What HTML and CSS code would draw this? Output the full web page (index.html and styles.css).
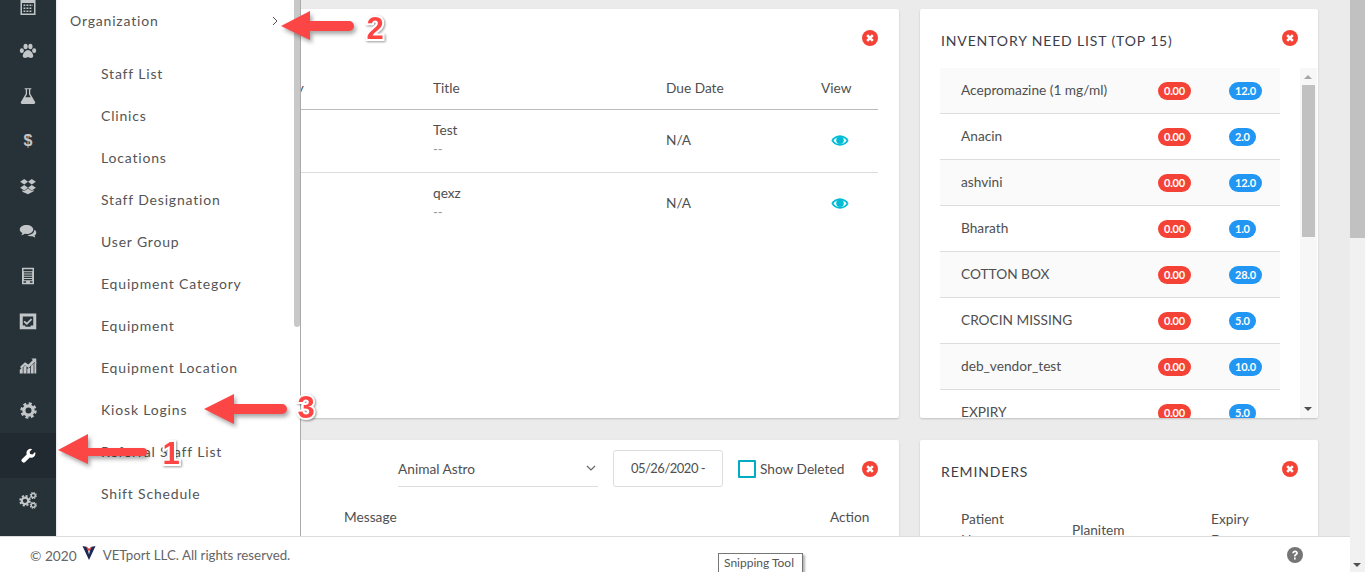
FILE: index.html
```html
<!DOCTYPE html>
<html lang="en">
<head>
<meta charset="utf-8">
<title>VETport Dashboard</title>
<link rel="stylesheet" href="styles.css">
</head>
<body>
<svg class="defs" width="0" height="0" aria-hidden="true">
  <symbol id="i-close" viewBox="0 0 16 16">
    <circle cx="8" cy="8" r="8" fill="#f44336"/>
    <path d="M5.200 5.200l5.600 5.600M10.800 5.200l-5.600 5.600" stroke="#fff" stroke-width="2.600" fill="none"/>
  </symbol>
  <symbol id="i-eye" viewBox="0 0 24 16">
    <path d="M12 1C7 1 2.800 3.800 .5 8c2.300 4.200 6.500 7 11.500 7s9.200-2.800 11.500-7C21.200 3.800 17 1 12 1z" fill="#00bcd4"/>
    <path d="M12 3.200C8.600 3.200 5.300 5 3.300 8c2 3 5.300 4.800 8.700 4.800S18.700 11 20.700 8C18.700 5 15.400 3.200 12 3.200z" fill="#fff"/>
    <circle cx="12" cy="7.600" r="5" fill="#00bcd4"/>
  </symbol>
  <symbol id="i-gear" viewBox="0 0 24 24">
    <circle cx="12" cy="12" r="6.500" fill="none" stroke="currentColor" stroke-width="4.500"/>
    <circle cx="12" cy="12" r="9.800" fill="none" stroke="currentColor" stroke-width="3.600" stroke-dasharray="4.200 3.500"/>
  </symbol>
</svg>

<div class="app">
  <div class="page">
    <div class="workspace">
      <nav class="rail">
        <a class="rail-item"><svg class="ic" viewBox="0 0 24 24"><path fill-rule="evenodd" d="M2 3h4V1h3v2h6V1h3v2h4v21H2zM4 8v14h16V8zM6 10h2.500v2H6zm4 0h2.500v2H10zm4 0h2.500v2H14zm3.500 0H18v2h-.5zM6 14h2.500v2H6zm4 0h2.500v2H10zm4 0h2.500v2H14zM6 18h2.500v2H6zm4 0h2.500v2H10zm4 0h2.500v2H14z"/></svg></a>
        <a class="rail-item"><svg class="ic" viewBox="0 0 24 24"><ellipse cx="3.800" cy="11.500" rx="2.700" ry="3.300"/><ellipse cx="8.800" cy="6" rx="2.800" ry="3.700"/><ellipse cx="15.200" cy="6" rx="2.800" ry="3.700"/><ellipse cx="20.200" cy="11.500" rx="2.700" ry="3.300"/><path d="M12 10.500c-3.200 0-7 4.500-7 7.800 0 2.200 1.600 2.900 3.200 2.900 1.500 0 2.500-.8 3.800-.8s2.300.8 3.800.8c1.600 0 3.200-.7 3.200-2.900 0-3.300-3.800-7.800-7-7.800z"/></svg></a>
        <a class="rail-item"><svg class="ic" viewBox="0 0 24 24"><path fill-rule="evenodd" d="M7.500 1.500h9V3H15v6l6.300 10.500c.9 1.500 0 3-1.600 3H4.300c-1.600 0-2.500-1.500-1.600-3L9 9V3H7.500zM10.700 3v6.500L8.400 13.500h7.200l-2.300-4V3z"/></svg></a>
        <a class="rail-item"><span class="dollar">$</span></a>
        <a class="rail-item"><svg class="ic" viewBox="0 0 24 24"><path d="M7 2.500l5 3.700-5 3.700-5.500-3.700zM17 2.500l5.500 3.700-5.500 3.700-5-3.700zM7 10.500l5 3.700-5 3.700-5.500-3.700zM17 10.500l5.500 3.700-5.500 3.700-5-3.700zM12 15.300l5 3.500 2.500-1.500v1.700L12 23l-7.500-3.500v-1.700L7 18.800z"/></svg></a>
        <a class="rail-item"><svg class="ic" viewBox="0 0 24 24"><path d="M10 4c5 0 9 2.600 9 6s-4 6-9 6c-.8 0-1.600-.1-2.300-.2C6.300 17 4.500 17.500 2.800 17.700c.8-.9 1.500-2 1.700-3.100C2.300 13.500 1 11.800 1 10c0-3.400 4-6 9-6z"/><path d="M20.600 10.300c1.500 1 2.400 2.400 2.400 3.900 0 1.500-.9 2.800-2.300 3.800.2 1 .7 1.900 1.300 2.600-1.400-.2-2.900-.6-4.100-1.600-2.600.3-5.200-.3-6.900-1.700 4.900 0 9.400-2.400 9.600-7z"/></svg></a>
        <a class="rail-item"><svg class="ic" viewBox="0 0 24 24"><path fill-rule="evenodd" d="M4 1h16v22H4zM6 3v2.500h12V3zM6.500 7v1.500h11V7zm0 3v1.500h11V10zm0 3v1.500h11V13zm0 3v1.500h11V16zM6 19v2h3.500v-2zm8.500 0v2H18v-2z"/></svg></a>
        <a class="rail-item"><svg class="ic" viewBox="0 0 24 24"><path fill-rule="evenodd" d="M1 2h22v21H1zM5 6v12h3.500v1.500h7V18H19V6zM7.500 11.500l3 2.500 5.500-5.500 1.500 1.700-7 7-4.500-4z"/></svg></a>
        <a class="rail-item"><svg class="ic" viewBox="0 0 24 24"><path d="M1.500 13l6.500-6 4.500 3L18.500 4 16.500 2h6.500v6.500l-2-2-8.200 8L8 11l-5 4.500z"/><path d="M1 17l4-3.500V22H1zM6 13l4-2v11H6zM11 15.500l4-1.500v8h-4zM16 12l3.500-3.500V22H16zM20.500 8l2.500-2v16h-2.500z"/></svg></a>
        <a class="rail-item"><svg class="ic ic-gear"><use href="#i-gear"/></svg></a>
        <a class="rail-item rail-active"><svg class="ic ic-wrench" viewBox="0 0 24 24"><path d="M22.500 6.500l-4.100 4-3.700-1-1-3.700L17.800 1.800a6.700 6.700 0 0 0-8.700 8.400L1.700 17.500a3.100 3.100 0 0 0 0 4.400l.6.600a3.100 3.100 0 0 0 4.400 0l7.300-7.300a6.700 6.700 0 0 0 8.500-8.700z"/></svg></a>
        <a class="rail-item"><svg class="ic" viewBox="0 0 24 24"><svg x="0" y="5" width="16" height="16" viewBox="0 0 24 24"><use href="#i-gear"/></svg><svg x="14" y="1" width="10" height="10" viewBox="0 0 24 24"><use href="#i-gear"/></svg><svg x="14" y="14" width="10" height="10" viewBox="0 0 24 24"><use href="#i-gear"/></svg></svg></a>
      </nav>

      <main class="board">
        <section class="card card-tall">
          <button class="close close-main"><svg class="close-ic"><use href="#i-close"/></svg></button>
          <div class="task-table">
            <div class="task-row task-head"><span></span><span>Category</span><span>Title</span><span>Due Date</span><span>View</span></div>
            <div class="task-row task-item">
              <span></span><span></span>
              <span class="stack"><span>Test</span><small>--</small></span>
              <span>N/A</span>
              <span class="eye-cell"><svg class="eye"><use href="#i-eye"/></svg></span>
            </div>
            <div class="task-row task-item task-last">
              <span></span><span></span>
              <span class="stack"><span>qexz</span><small>--</small></span>
              <span>N/A</span>
              <span class="eye-cell"><svg class="eye"><use href="#i-eye"/></svg></span>
            </div>
          </div>
        </section>

        <section class="card card-tall">
          <h2 class="card-title">INVENTORY NEED LIST (TOP 15)</h2>
          <button class="close close-side"><svg class="close-ic"><use href="#i-close"/></svg></button>
          <div class="need-body">
            <ul class="need-list">
              <li class="need-row"><span>Acepromazine (1 mg/ml)</span><b class="badge red">0.00</b><b class="badge blue">12.0</b></li>
              <li class="need-row"><span>Anacin</span><b class="badge red">0.00</b><b class="badge blue">2.0</b></li>
              <li class="need-row"><span>ashvini</span><b class="badge red">0.00</b><b class="badge blue">12.0</b></li>
              <li class="need-row"><span>Bharath</span><b class="badge red">0.00</b><b class="badge blue">1.0</b></li>
              <li class="need-row"><span>COTTON BOX</span><b class="badge red">0.00</b><b class="badge blue">28.0</b></li>
              <li class="need-row"><span>CROCIN MISSING</span><b class="badge red">0.00</b><b class="badge blue">5.0</b></li>
              <li class="need-row"><span>deb_vendor_test</span><b class="badge red">0.00</b><b class="badge blue">10.0</b></li>
              <li class="need-row"><span>EXPIRY</span><b class="badge red">0.00</b><b class="badge blue">5.0</b></li>
            </ul>
            <div class="mini-scroll"><i class="arrow-up"></i><i class="mini-thumb"></i><i class="arrow-down"></i></div>
          </div>
        </section>

        <section class="card card-low">
          <div class="filters">
            <div class="select"><span>Animal Astro</span><svg class="chev" viewBox="0 0 10 6"><path d="M1 1l4 4 4-4" fill="none" stroke="#666" stroke-width="1.200"/></svg></div>
            <div class="date">05/26/2020 -</div>
            <i class="check"></i>
            <span class="check-label">Show Deleted</span>
            <button class="close close-filter"><svg class="close-ic"><use href="#i-close"/></svg></button>
          </div>
          <div class="msg-head"><span></span><span>Message</span><span>Action</span></div>
        </section>

        <section class="card card-low">
          <h2 class="card-title">REMINDERS</h2>
          <button class="close close-side close-rem"><svg class="close-ic"><use href="#i-close"/></svg></button>
          <div class="rem-head"><span>Patient<br>Name</span><span>Planitem</span><span>Expiry<br>Date</span></div>
        </section>
      </main>
    </div>
    <footer class="footer">
      <span class="copy">© 2020</span>
      <svg class="logo" viewBox="0 0 14 15"><path d="M0 0l5 1 2 8 2-8 5-1-7 15z" fill="#1c2a55"/><path d="M3 0l4 6 4-6-4 3z" fill="#e53935"/></svg>
      <span class="rights">VETport LLC. All rights reserved.</span>
      <svg class="help" viewBox="0 0 16 16"><circle cx="8" cy="8" r="8" fill="#757575"/><path d="M5.200 6.200C5.400 4.500 6.500 3.600 8.100 3.600c1.600 0 2.800 1 2.800 2.400 0 1.100-.6 1.700-1.400 2.200-.7.400-.9.700-.9 1.400H7c0-1.300.4-1.900 1.300-2.500.6-.4.900-.6.900-1.100 0-.5-.4-.8-1.100-.8-.7 0-1.100.4-1.300 1.100zM7 10.500h1.700v1.900H7z" fill="#fff"/></svg>
    </footer>
  </div>
  <div class="page-scroll"><i class="page-thumb"></i><i class="arrow-down page-down"></i></div>
</div>

<aside class="flyout">
  <div class="fly-head"><span>Organization</span><svg class="fly-chev" viewBox="0 0 6 10"><path d="M1 1l4 4-4 4" fill="none" stroke="#555" stroke-width="1"/></svg></div>
  <ul class="fly-list">
    <li>Staff List</li>
    <li>Clinics</li>
    <li>Locations</li>
    <li>Staff Designation</li>
    <li>User Group</li>
    <li>Equipment Category</li>
    <li>Equipment</li>
    <li>Equipment Location</li>
    <li>Kiosk Logins</li>
    <li>Referral Staff List</li>
    <li>Shift Schedule</li>
  </ul>
  <i class="fly-thumb"></i>
</aside>

<div class="tooltip">Snipping Tool</div>

<svg class="marks" viewBox="0 0 1365 572">
  <g class="mark">
    <path d="M58 450l30-16v14h55a4 4 0 0 1 0 8H88v8z"/>
    <path d="M281 26l29-15v10h39a5 5 0 0 1 0 10h-39v9z"/>
    <path d="M204 409l30-15v10h48a5 5 0 0 1 0 10h-48v10z"/>
  </g>
  <text class="num" x="171" y="464">1</text>
  <text class="num" x="375" y="39">2</text>
  <text class="num" x="306" y="418">3</text>
</svg>
</body>
</html>
```
FILE: styles.css
```css
* { box-sizing: border-box; }
html, body { margin: 0; height: 100%; overflow: hidden; }
body { font-family: Lato, "Noto Sans", sans-serif; font-size: 13.700px; color: #4f4f4f; background: #ebebeb; }
ul { list-style: none; margin: 0; padding: 0; }
i { display: block; }
.defs { position: absolute; }

.app { display: flex; height: 572px; }
.page { flex: 1; display: flex; flex-direction: column; min-width: 0; }
.workspace { flex: 1; display: flex; min-height: 0; overflow: hidden; }

.rail { width: 56px; flex: none; background: #263238; overflow: hidden; display: flex; flex-direction: column; }
.rail-item { height: 44.900px; flex: none; display: flex; align-items: center; justify-content: center; color: #c3c6c8; fill: currentColor; }
.rail-item:first-child { margin-top: -16px; }
.rail-active { background: #212a30; color: #fff; }
.ic { width: 18px; height: 18px; display: block; }
.ic-gear { width: 17px; height: 17px; }
.ic-wrench { width: 15px; height: 15px; }
.dollar { font: bold 16px "Liberation Sans", sans-serif; }

.board { flex: 1; min-width: 0; display: grid; grid-template-columns: 1fr 398px; grid-template-rows: 409px 200px; column-gap: 21px; row-gap: 22px; padding: 9px 32px 0 20px; }
.card { position: relative; background: #fff; border-radius: 2px; box-shadow: 0 1px 2px rgba(0,0,0,.18); overflow: hidden; }
.card-title { margin: 0; padding: 23px 0 0 21px; font-size: 14px; font-weight: 400; letter-spacing: .860px; line-height: 18px; color: #3d3d4a; }

.close { position: absolute; padding: 0; border: 0; background: none; width: 16px; height: 16px; }
.close-ic { display: block; width: 16px; height: 16px; }
.close-main { top: 21px; right: 21px; }
.close-side { top: 21px; right: 20px; }
.close-filter { position: static; margin-left: 20px; }

.task-table { padding: 60px 21px 0; }
.task-row { display: grid; grid-template-columns: 152px 184px 233px 155px 1fr; }
.task-head { height: 41px; align-items: center; padding-bottom: 4px; border-bottom: 1px solid #bbb; }
.task-item { height: 63px; align-items: center; padding-bottom: 4px; border-bottom: 1px solid #ddd; }
.task-last { border-bottom: 0; }
.stack { display: flex; flex-direction: column; gap: 7px; line-height: 13px; }
.stack small { font-size: 13px; color: #999; }
.eye-cell { display: flex; padding: 2px 0 0 10px; }
.eye { width: 18px; height: 13px; display: block; }

.need-body { display: flex; position: absolute; top: 59px; left: 20px; right: 1px; bottom: 0; }
.need-list { width: 340px; flex: none; }
.need-row { height: 46px; display: grid; grid-template-columns: 197px 71px 1fr; align-items: center; padding-left: 21px; border-bottom: 1px solid #ddd; }
.need-row:nth-child(odd) { background: #fafafa; }
.need-row span { margin-top: -2px; }
.badge { justify-self: start; min-width: 26px; height: 18px; line-height: 18px; padding: 0 6px; border-radius: 9px; font-size: 11px; letter-spacing: -.2px; color: #fff; text-align: center; }
.red { background: #f44336; }
.blue { background: #2196f3; }
.mini-scroll { margin-left: auto; width: 17px; position: relative; background: #f7f7f7; }
.mini-thumb { position: absolute; left: 2px; right: 2px; top: 17px; height: 152px; background: #c1c1c1; }
.arrow-up, .arrow-down { position: absolute; width: 0; height: 0; border-left: 4px solid transparent; border-right: 4px solid transparent; }
.arrow-up { top: 7px; left: 4px; border-bottom: 4px solid #a6a6a6; }
.arrow-down { bottom: 7px; left: 4px; border-top: 4px solid #505050; }

.filters { display: flex; justify-content: flex-end; align-items: center; height: 37px; margin-top: 10px; padding-right: 21px; }
.select { width: 200px; height: 37px; display: flex; align-items: center; justify-content: space-between; border-bottom: 1px solid #ddd; padding-right: 1px; }
.chev { width: 10px; height: 6px; margin-right: 1px; }
.date { width: 110px; height: 37px; margin-left: 15px; border: 1px solid #ddd; border-radius: 3px; line-height: 35px; text-align: center; font-size: 13px; letter-spacing: -.5px; }
.check { width: 18px; height: 18px; margin-left: 15px; border: 2px solid #00acc1; border-radius: 1px; }
.check-label { width: 82px; margin-left: 4px; white-space: nowrap; }
.msg-head { display: grid; grid-template-columns: 247px 486px 1fr; padding: 21px 21px 0; line-height: 18px; }

.rem-head { display: grid; grid-template-columns: 111px 139px 1fr; align-items: center; padding: 27px 0 0 41px; line-height: 21px; }

.footer { height: 36px; flex: none; display: flex; align-items: center; padding: 1px 47px 0 30px; background: #fff; border-top: 1px solid #ddd; color: #666; position: relative; }
.logo { width: 14px; height: 14px; margin: -4px 7px 0 5px; }
.rights { font-size: 13.300px; }
.help { width: 16px; height: 16px; margin-left: auto; }

.page-scroll { width: 15px; flex: none; position: relative; background: #f1f1f1; }
.page-thumb { height: 238px; background: #c1c1c1; }
.page-down { left: 3px; bottom: 5px; }

.flyout { position: absolute; left: 56px; top: 0; width: 245px; height: 536px; background: #fff; border-right: 1px solid #aaa; box-shadow: inset 2px 0 2px -1px rgba(0,0,0,.1); font-size: 14px; letter-spacing: .820px; color: #555; }
.fly-head { display: flex; align-items: center; justify-content: space-between; height: 40px; padding: 0 22px 0 14px; }
.fly-chev { width: 6px; height: 10px; margin-top: 2px; }
.fly-list { padding: 13px 0 0 45px; }
.fly-list li { height: 42px; line-height: 42px; }
.fly-thumb { position: absolute; top: 0; right: 0; width: 6px; height: 327px; background: #c8c8c8; border-radius: 0 0 3px 3px; }

.tooltip { position: absolute; left: 718px; top: 553px; width: 85px; height: 19px; padding: 1px 0 0 5px; background: #fff; border: 1px solid #767676; border-bottom: 0; font-size: 12px; box-shadow: 2px 2px 2px rgba(0,0,0,.3); color: #555; white-space: nowrap; }

.marks { position: absolute; left: 0; top: 0; width: 1365px; height: 572px; pointer-events: none; }
.mark { fill: #fc4646; filter: drop-shadow(2px 3px 2px rgba(0,0,0,.35)); }
.num { font: bold 31px "Liberation Sans", sans-serif; fill: #f44; stroke: #fff; stroke-width: 4px; paint-order: stroke; text-anchor: middle; filter: drop-shadow(1px 1px 1px rgba(0,0,0,.4)); }
```
